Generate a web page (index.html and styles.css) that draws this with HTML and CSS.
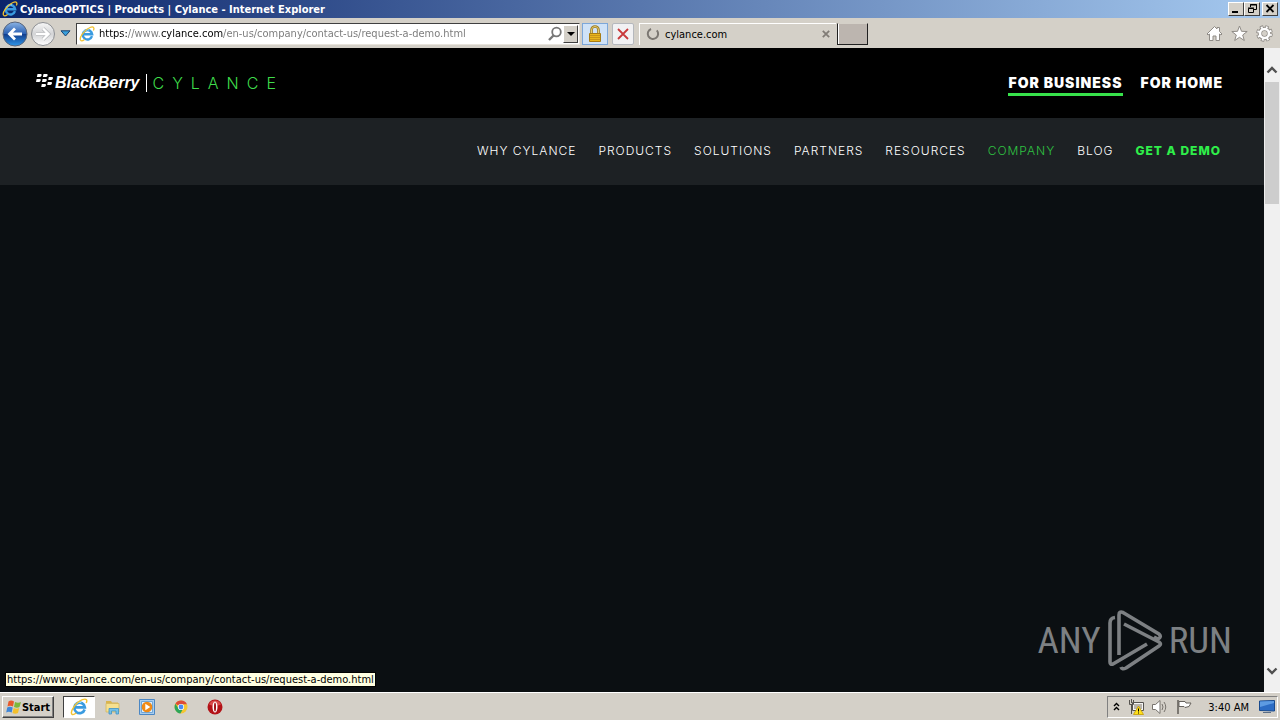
FILE: index.html
```html
<!DOCTYPE html>
<html lang="en">
  <head>
    <meta charset="UTF-8" />
    <meta name="viewport" content="width=device-width, initial-scale=1.0" />
    <title>CylanceOPTICS | Products | Cylance</title>
    <link rel="stylesheet" href="styles.css">
  </head>
  <body>
    <!-- shared icons -->
    <svg class="defs" aria-hidden="true">
      <symbol id="ie" viewBox="0 0 16 16">
        <path d="M13 10.200A4.700 4.700 0 1 1 13.200 8.300H5" fill="none" stroke="#3a9be0" stroke-width="2.400" />
        <path d="M4.500 6.600a4.300 4.300 0 0 1 5.500-2.600" fill="none" stroke="#a5e4ff" stroke-width="1" />
        <path d="M1.800 14.600C-.5 12 5.500 3.600 11 1.500c4-1.500 4.500.600 3.400 3" fill="none" stroke="#f2c230" stroke-width="1.300" />
        <path d="M1.800 14.600c1 .6 2.600-.3 3.800-1.200" fill="none" stroke="#f2c230" stroke-width="1.200" />
      </symbol>
    </svg>

    <!-- window title -->
    <div class="titlebar">
      <svg class="icon16"><use href="#ie" /></svg>
      <span class="caption">CylanceOPTICS | Products | Cylance - Internet Explorer</span>
      <div class="win-buttons">
        <button aria-label="Minimize"><svg viewBox="0 0 14 12"><path d="M3 9h6" stroke="#000" stroke-width="2" /></svg></button>
        <button aria-label="Restore"><svg viewBox="0 0 14 12"><path d="M5.500 4V1.500h6v5H9M5 2h7M3.500 5.500h5v4h-5zM3 5h6" fill="none" stroke="#000" /></svg></button>
        <button class="close" aria-label="Close"><svg viewBox="0 0 14 12"><path d="M3.500 2l7 7M10.500 2l-7 7" stroke="#000" stroke-width="1.800" /></svg></button>
      </div>
    </div>

    <!-- address bar and tabs -->
    <div class="toolbar">
      <div class="nav-buttons">
        <button aria-label="Back">
          <svg width="26" height="26" viewBox="0 0 26 26">
            <defs>
              <linearGradient id="blue" x2="0" y2="1">
                <stop offset="0" stop-color="#8cb4e4" />
                <stop offset=".48" stop-color="#2d62b4" />
                <stop offset=".52" stop-color="#123f8f" />
                <stop offset="1" stop-color="#2f96e8" />
              </linearGradient>
            </defs>
            <circle cx="13" cy="13" r="12" fill="url(#blue)" stroke="#59657a" />
            <path d="M20 13H8M13 7.500L7.500 13l5.500 5.500" fill="none" stroke="#fff" stroke-width="2.800" />
          </svg>
        </button>
        <button aria-label="Forward">
          <svg width="26" height="26" viewBox="0 0 26 26">
            <defs>
              <linearGradient id="pale" x2="0" y2="1">
                <stop offset="0" stop-color="#f7f7f7" />
                <stop offset=".5" stop-color="#d3d4d6" />
                <stop offset="1" stop-color="#fff" />
              </linearGradient>
            </defs>
            <circle cx="13" cy="13" r="11.500" fill="url(#pale)" stroke="#8d8f93" />
            <path d="M6 13h12M13 7.500l5.500 5.500-5.500 5.500" fill="none" stroke="#b4b6b9" stroke-width="3.800" />
            <path d="M6 13h12M13 7.500l5.500 5.500-5.500 5.500" fill="none" stroke="#fff" stroke-width="2.400" />
          </svg>
        </button>
        <button class="history" aria-label="Recent pages">
          <svg width="11" height="7" viewBox="0 0 11 7"><path d="M1 .8h9L5.500 6z" fill="#39a0dc" stroke="#1a4270" /></svg>
        </button>
      </div>
      <div class="address">
        <svg class="icon16"><use href="#ie" /></svg>
        <input class="url" type="text" aria-label="Address" value="https://www.cylance.com/en-us/company/contact-us/request-a-demo.html" />
        <svg width="14" height="16" viewBox="0 0 14 16"><circle cx="8.500" cy="6" r="4.300" fill="#fff" stroke="#777" stroke-width="1.800" /><path d="M5.500 9.500L1 14" stroke="#777" stroke-width="2.400" /></svg>
        <button class="drop" aria-label="Show addresses"><svg width="8" height="4" viewBox="0 0 8 4"><path d="M0 0h8L4 4z" /></svg></button>
      </div>
      <button class="tool lock" aria-label="Security report">
        <svg width="16" height="18" viewBox="0 0 16 18">
          <path d="M4.500 9V5a3.500 3.500 0 0 1 7 0v4" fill="none" stroke="#9a7a20" stroke-width="2.600" />
          <path d="M4.500 9V5a3.500 3.500 0 0 1 7 0v4" fill="none" stroke="#e6cc70" stroke-width="1" />
          <path d="M2.500 8.500h11v8h-11z" fill="#e9b61d" stroke="#a87c14" />
          <path d="M3 10.500h10M3 12.500h10M3 14.500h10" stroke="#c9951a" />
        </svg>
      </button>
      <button class="tool stop" aria-label="Stop">
        <svg width="14" height="14" viewBox="0 0 14 14"><path d="M2 2l10 10M12 2L2 12" stroke="#c9393c" stroke-width="1.800" /></svg>
      </button>
      <div class="tab">
        <svg width="14" height="14" viewBox="0 0 14 14"><path d="M8 1.800A5.200 5.200 0 1 1 2.500 4" fill="none" stroke="#7b7772" stroke-width="2" transform="rotate(35 7 7)" /></svg>
        <span class="tab-title">cylance.com</span>
        <button aria-label="Close tab"><svg width="8" height="8" viewBox="0 0 8 8"><path d="M.8.800l6.400 6.400M7.200.800L.8 7.200" stroke="#817c76" stroke-width="1.800" /></svg></button>
      </div>
      <button class="new-tab" aria-label="New tab"></button>
      <div class="tools">
        <button aria-label="Home"><svg width="17" height="17" viewBox="0 0 17 17"><path d="M1 9l7.500-7.500L11 4V2.500h2.500v4L16 9l-1 1-1.500-1v6.500h-3.500v-4.500H7v4.500H3.500V9L2 10z" fill="#fff" stroke="#8f8b86" /></svg></button>
        <button aria-label="Favorites"><svg width="17" height="17" viewBox="0 0 17 17"><path d="M8.500 1l2 5.300 5.700.2-4.500 3.500 1.600 5.500-4.800-3.200-4.800 3.200L5.300 10 .8 6.500l5.700-.2z" fill="#fff" stroke="#8f8b86" /></svg></button>
        <button aria-label="Tools"><svg width="17" height="17" viewBox="0 0 17 17"><circle cx="8.500" cy="8.500" r="6.300" fill="none" stroke="#8f8b86" stroke-width="4" stroke-dasharray="3 1.948" /><circle cx="8.500" cy="8.500" r="4.600" fill="none" stroke="#8f8b86" stroke-width="4.400" /><circle cx="8.500" cy="8.500" r="6.300" fill="none" stroke="#fff" stroke-width="2.400" stroke-dasharray="1.800 3.148" stroke-dashoffset="-.6" /><circle cx="8.500" cy="8.500" r="4.500" fill="none" stroke="#fff" stroke-width="2.600" /><circle cx="8.500" cy="8.500" r="2.300" fill="#d4d0c8" /></svg></button>
      </div>
    </div>

    <!-- page -->
    <div class="viewport">
      <div class="page">
        <header class="top">
          <a class="logo" href="#">
            <svg width="17" height="14" viewBox="0 0 17 14" fill="#fff">
              <path d="M1.500 0h3.400q1 .2.700 1.500T4 3H.9zM7.500 0h3.400q1 .2.700 1.500T10 3H6.900zM.6 5H4q1 .2.700 1.500T3.100 8H0zM6.600 5H10q1 .2.700 1.500T9.100 8H6zM12.800 3h3.400q1 .2.700 1.500T15.300 6h-3.100zM11.800 8h3.400q1 .2.700 1.500t-1.600 1.500h-3.100zM5.800 10h3.400q1 .2.700 1.500T8.300 13H5.200z" />
            </svg>
            <span class="blackberry">BlackBerry</span>
            <span class="cylance">CYLANCE</span>
          </a>
          <nav class="audience">
            <a class="on" href="#">FOR BUSINESS</a>
            <a href="#">FOR HOME</a>
          </nav>
        </header>
        <nav class="menu">
          <a href="#">WHY CYLANCE</a>
          <a href="#">PRODUCTS</a>
          <a href="#">SOLUTIONS</a>
          <a href="#">PARTNERS</a>
          <a href="#">RESOURCES</a>
          <a class="current" href="#">COMPANY</a>
          <a href="#">BLOG</a>
          <a class="demo" href="#">GET A DEMO</a>
        </nav>
        <main></main>
        <div class="status">https://www.cylance.com/en-us/company/contact-us/request-a-demo.html</div>
        <div class="watermark">
          <span>ANY</span>
          <svg width="56" height="62" viewBox="0 0 56 62" fill="none" stroke="#7d8083" stroke-width="3.600" stroke-linejoin="round">
            <path d="M8 7.500Q3 8 3 13v39q0 3 3 2l34-20" />
            <path d="M12 45V5q0-4 4-2.500L52 24q3 3-1 5l-4-2" />
            <path d="M17 14l35 18q3 2 0 4L19 58q-4 2-5-1" />
          </svg>
          <span>RUN</span>
        </div>
      </div>
      <div class="scrollbar">
        <svg width="12" height="8" viewBox="0 0 12 8"><path d="M1.500 6.500L6 2l4.500 4.500" fill="none" stroke="#505050" stroke-width="2.400" /></svg>
        <div class="thumb"></div>
        <svg class="down" width="12" height="8" viewBox="0 0 12 8"><path d="M1.500 1.500L6 6l4.500-4.500" fill="none" stroke="#505050" stroke-width="2.400" /></svg>
      </div>
    </div>

    <!-- taskbar -->
    <div class="taskbar">
      <button class="start">
        <svg width="16" height="16" viewBox="0 0 16 16">
          <path d="M2.500 2.500Q5 .5 8 2.500L7 7.500q-3-1.500-5.500 0z" fill="#e8592b" />
          <path d="M9 3q3 1.500 6 0l-1.500 5q-2.500 1.500-5.500 0z" fill="#7db83a" />
          <path d="M1.200 8.500q2.500-1.500 5.500 0l-1 5q-3-1.500-5.500 0z" fill="#3f86d8" />
          <path d="M7.700 9q3 1.500 5.500 0l-1.200 5q-2.700 1.500-5.500 0z" fill="#f4c02c" />
        </svg>
        Start
      </button>
      <div class="apps">
        <button class="active" aria-label="Internet Explorer"><svg width="18" height="18"><use href="#ie" /></svg></button>
        <button aria-label="Windows Explorer">
          <svg width="16" height="16" viewBox="0 0 16 16">
            <path d="M1 2h5l1 1.500h6V6H1z" fill="#d9b44e" />
            <path d="M1 4.500h13V13H1z" fill="#f6e08f" stroke="#d3b860" stroke-width=".8" />
            <path d="M4 15V9.500h9.500V15h-2.500v-3H6.500v3z" fill="#74c0e8" stroke="#3c92c6" stroke-width=".8" />
          </svg>
        </button>
        <button aria-label="Media Player">
          <svg width="16" height="16" viewBox="0 0 16 16">
            <path d="M.5.500h15v15H.5z" fill="#a9cdee" stroke="#4b87c4" />
            <path d="M2.500 2.500h11v11h-11z" fill="#dcecf9" stroke="#6fa6d8" />
            <circle cx="8" cy="8" r="5.300" fill="#f08a16" />
            <path d="M6.300 4.800L11.300 8l-5 3.200z" fill="#fff" />
          </svg>
        </button>
        <button aria-label="Chrome">
          <svg width="14" height="14" viewBox="0 0 14 14">
            <circle cx="7" cy="7" r="6.500" fill="#f5c631" />
            <path d="M7 7L1.400 3.800A6.500 6.500 0 0 1 12.900 4.200H7z" fill="#dd4b39" />
            <path d="M1.400 3.800A6.500 6.500 0 0 0 6.400 13.500L9.300 8.600 7 7 4.500 8.400z" fill="#2da55a" />
            <circle cx="7" cy="7" r="3.100" fill="#fff" />
            <circle cx="7" cy="7" r="2.400" fill="#4a8af4" />
          </svg>
        </button>
        <button aria-label="Opera">
          <svg width="16" height="16" viewBox="0 0 16 16">
            <circle cx="8" cy="8" r="7.500" fill="#b31217" />
            <path d="M2 5.500a6.500 6.500 0 0 1 12 0Q8 8 2 5.500z" fill="#d94b4b" />
            <ellipse cx="8" cy="8" rx="2.500" ry="5.500" fill="#fff" />
            <ellipse cx="8" cy="8" rx="1" ry="4.600" fill="#a01015" />
          </svg>
        </button>
      </div>
      <div class="tray">
        <svg width="7" height="10" viewBox="0 0 7 10"><path d="M1 4L3.500 1.500 6 4M1 8L3.500 5.500 6 8" fill="none" stroke="#000" stroke-width="1.400" /></svg>
        <svg width="16" height="16" viewBox="0 0 16 16">
          <path d="M4.500 3.500h11v8h-11zM7 14h6" fill="#f4f4f4" stroke="#55524e" />
          <path d="M6 5h8v5H6z" fill="#b8b4ac" />
          <path d="M1.500 1v4.500h4V1M3.500 0v4M3.500 6v9" fill="none" stroke="#55524e" />
          <path d="M10.500 7l5 8.500h-10z" fill="#ffe11b" stroke="#c49b00" stroke-width=".8" />
          <path d="M10.500 9.500v3M10.500 13.500v1" stroke="#000" />
        </svg>
        <svg width="16" height="16" viewBox="0 0 16 16">
          <path d="M.5 5.500h3L8 1.500v13l-4.500-4h-3z" fill="#fff" stroke="#77736d" />
          <path d="M10 5q2 3 0 6M12 3q3.500 5 0 10" fill="none" stroke="#77736d" />
        </svg>
        <svg width="16" height="16" viewBox="0 0 16 16">
          <path d="M2 1v14" stroke="#66625d" stroke-width="1.600" />
          <path d="M3 2.500h6l1 1.500h5l-2 3.500-4 1-1-1H3z" fill="#fff" stroke="#66625d" />
        </svg>
        <span class="clock">3:40 AM</span>
        <button aria-label="Show desktop">
          <svg width="16" height="14" viewBox="0 0 16 14">
            <path d="M.5 1l15-.5V11l-15-.5z" fill="#2c6cc4" stroke="#184a8e" />
            <path d="M1 1.500l14-.5v2L1 7z" fill="#5d9be2" />
            <path d="M4 12.500h8" stroke="#5a6d85" />
          </svg>
        </button>
      </div>
    </div>
  </body>
</html>
```
FILE: styles.css
```css
* {
  box-sizing: border-box;
}
body {
  margin: 0;
  height: 100vh;
  display: flex;
  flex-direction: column;
  font-family: "DejaVu Sans Condensed", "DejaVu Sans", sans-serif;
  font-size: 11px;
  color: #000;
  background-color: #d4d0c8;
  overflow: hidden;
}
button {
  display: flex;
  align-items: center;
  justify-content: center;
  padding: 0;
  border: none;
  background: none;
  font: inherit;
  color: inherit;
}
a {
  text-decoration: none;
  color: inherit;
}
svg {
  flex: none;
}
.defs {
  position: absolute;
  width: 0;
  height: 0;
}
.icon16 {
  width: 16px;
  height: 16px;
}

/* title bar */
.titlebar {
  display: flex;
  align-items: center;
  height: 18px;
  padding: 0 2px;
  background: linear-gradient(to right, #0a246a, #a6caf0);
  color: #fff;
  font-weight: bold;
}
.caption {
  flex: 1;
  margin-left: 2px;
}
.win-buttons {
  display: flex;
}
.win-buttons button {
  width: 16px;
  height: 14px;
  background-color: #d4d0c8;
  border: 1px solid;
  border-color: #fff #404040 #404040 #fff;
}
.win-buttons .close {
  margin-left: 2px;
}

/* toolbar */
.toolbar {
  display: flex;
  align-items: center;
  height: 30px;
  padding: 1px 7px 0 2px;
}
.nav-buttons {
  display: flex;
  gap: 2px;
  width: 74px;
}
.history {
  margin-left: 2px;
}
.address {
  display: flex;
  align-items: center;
  width: 504px;
  height: 22px;
  padding: 1px 1px 1px 2px;
  background-color: #fff;
  border: 1px solid;
  border-color: #404040 #e8e4dc #e8e4dc #404040;
}
.url {
  flex: 1;
  min-width: 0;
  margin: 0 0 0 4px;
  padding: 0;
  border: none;
  outline: none;
  font: inherit;
  /* scheme and host are dark, the rest is grey */
  background: linear-gradient(to right, #000 28px, #777 28px 62px, #000 62px 124px, #777 124px);
  background-clip: text;
  -webkit-background-clip: text;
  color: transparent;
}
.drop {
  width: 15px;
  height: 18px;
  margin-left: 1px;
  background-color: #d4d0c8;
  border: 1px solid;
  border-color: #fff #404040 #404040 #fff;
}
.tool {
  width: 26px;
  height: 22px;
  margin-left: 2px;
  border: 1px solid #7da7d9;
  background-color: #cfe2f7;
}
.stop {
  width: 22px;
  margin-left: 4px;
  border-color: #b5b8bd;
  border-radius: 2px;
  background-color: #f1f1f3;
}
.tab {
  display: flex;
  align-items: center;
  width: 197px;
  height: 22px;
  margin-left: 5px;
  padding: 0 6px;
  border-top: 1px solid #fff;
  border-left: 1px solid #fff;
}
.tab-title {
  flex: 1;
  margin-left: 5px;
}
.new-tab {
  width: 31px;
  height: 22px;
  margin-left: 1px;
  background-color: #bcb5af;
  border: 1px solid #202020;
  border-top-color: #d4d0c8;
  box-shadow: inset 1px 0 #fff;
}
.tools {
  display: flex;
  gap: 8px;
  margin-left: auto;
}

/* page */
.viewport {
  flex: 1;
  display: flex;
  min-height: 0;
}
.page {
  position: relative;
  flex: 1;
  display: flex;
  flex-direction: column;
  background-color: #0b0f12;
  color: #fff;
  font-family: Inter, Roboto, sans-serif;
}
.top {
  display: flex;
  align-items: center;
  justify-content: space-between;
  height: 70px;
  padding: 0 41px 0 36px;
  background-color: #000;
}
.logo {
  display: flex;
  align-items: center;
}
.logo svg {
  margin-bottom: 4px;
}
.blackberry {
  margin-left: 2px;
  padding-right: 6px;
  border-right: 1px solid #fff;
  font: italic bold 16px/18px "Liberation Sans", sans-serif;
}
.cylance {
  margin-left: 6px;
  font-size: 16px;
  font-weight: 300;
  letter-spacing: 8px;
  color: #3fdc4b;
}
.audience {
  display: flex;
  gap: 18px;
  padding-top: 2px;
  font-size: 14px;
  line-height: 20px;
  font-weight: 900;
  letter-spacing: 1px;
}
.audience a {
  border-bottom: 3px solid transparent;
}
.audience .on {
  border-color: #37e34b;
}
.menu {
  display: flex;
  align-items: center;
  justify-content: flex-end;
  gap: 22px;
  height: 67px;
  padding: 0 43px 2px 36px;
  background-color: #1d2124;
  font-size: 12px;
  font-weight: 300;
  letter-spacing: 1px;
}
.menu .current {
  color: #2fc142;
}
.menu .demo {
  color: #2fee4a;
  font-weight: 800;
}
main {
  flex: 1;
}
.status {
  position: absolute;
  left: 5px;
  bottom: 5px;
  padding: 0 1px;
  border: 1px solid #000;
  background-color: #ffffe1;
  color: #000;
  font: 11px/13px "DejaVu Sans Condensed", "DejaVu Sans", sans-serif;
}
.watermark {
  position: absolute;
  right: 32px;
  bottom: 20px;
  display: flex;
  align-items: center;
  gap: 6px;
  color: #7d8083;
  font: 37px/62px "Roboto Condensed", "Open Sans Condensed", "Liberation Sans Narrow", "Liberation Sans", sans-serif;
}
.scrollbar {
  display: flex;
  flex-direction: column;
  align-items: center;
  width: 16px;
  padding: 18px 0 17px;
  background-color: #f0f0f0;
}
.thumb {
  width: 14px;
  height: 122px;
  margin-top: 8px;
  background-color: #cdcdcd;
}
.down {
  margin-top: auto;
}

/* taskbar */
.taskbar {
  display: flex;
  align-items: center;
  height: 28px;
  padding: 1px 2px 0;
  border-top: 1px solid #fff;
}
.start {
  width: 52px;
  height: 22px;
  border: 1px solid;
  border-color: #fff #404040 #404040 #fff;
  box-shadow: inset -1px -1px #808080;
  font-weight: bold;
}
.apps {
  display: flex;
  gap: 2px;
  margin-left: 9px;
}
.apps button {
  width: 32px;
  height: 22px;
}
.apps .active {
  background-color: #fff;
  border: 1px solid;
  border-color: #404040 #fff #fff #404040;
}
.tray {
  display: flex;
  align-items: center;
  gap: 8px;
  height: 22px;
  margin-left: auto;
  padding: 0 2px 0 5px;
  border: 1px solid;
  border-color: #808080 #fff #fff #808080;
}
.clock {
  margin: 0 2px 0 8px;
}
```
